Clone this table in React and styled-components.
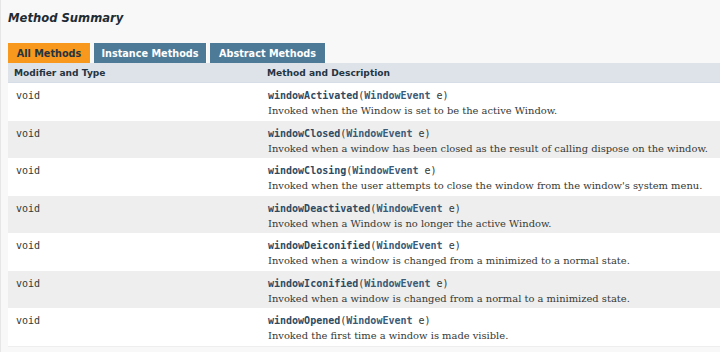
import React from "react";
import styled, { createGlobalStyle } from "styled-components";

const GlobalStyle = createGlobalStyle`
  html, body {
    margin: 0;
    padding: 0;
    background: #f8f8f8;
  }
  body {
    font-family: "DejaVu Sans", Arial, sans-serif;
    color: #353833;
  }
`;

const Section = styled.div`
  border-left: 1px solid #e6e6e6;
  padding: 0 0 5px 7px;
  background: #f8f8f8;
  min-height: 352px;
  box-sizing: border-box;
  overflow: hidden;
`;

const Title = styled.h3`
  margin: 0;
  padding: 10px 0 0 0;
  font-size: 11.6px;
  font-style: italic;
  font-weight: bold;
  color: #1f2b33;
  height: 43px;
  box-sizing: border-box;
  line-height: 16px;
`;

const Tabs = styled.div`
  display: flex;
  gap: 3px;
  height: 20px;
`;

const Tab = styled.span`
  display: flex;
  align-items: center;
  justify-content: center;
  width: ${(p) => p.$w}px;
  height: 20px;
  font-size: 9.7px;
  font-weight: bold;
  background: ${(p) => (p.$active ? "#f8981d" : "#4d7a97")};
  color: ${(p) => (p.$active ? "#253441" : "#ffffff")};
  box-sizing: border-box;
  white-space: nowrap;
  border-right: 1px solid #ffffff;
`;

const Table = styled.div`
  display: grid;
  grid-template-columns: 253px 1fr;
  width: 720px;
  border-bottom: 1px solid #eeeeee;
`;

const HeadCell = styled.div`
  background: #dee3e9;
  height: 20px;
  display: flex;
  align-items: center;
  padding-left: 6px;
  font-size: 9.1px;
  font-weight: bold;
  color: #253441;
  border-bottom: 1px solid #d6dde6;
  box-sizing: border-box;
  white-space: nowrap;
`;

const Cell = styled.div`
  background: ${(p) => (p.$alt ? "#eeeeee" : "#ffffff")};
  padding: 6px 0 2.5px ${(p) => (p.$last ? "7px" : "8px")};
  height: 37.5px;
  box-sizing: border-box;
  white-space: nowrap;
`;

const Code = styled.code`
  display: block;
  font-family: "DejaVu Sans Mono", monospace;
  font-size: 10px;
  line-height: 14px;
  color: #353833;
`;

const MethodName = styled.span`
  font-weight: bold;
  color: #2e4a63;
`;

const TypeLink = styled.span`
  font-weight: bold;
  color: #3c5a76;
`;

const Desc = styled.div`
  font-family: "DejaVu Serif", Georgia, serif;
  font-size: 9.92px;
  line-height: 15px;
  color: #353833;
`;

const methods = [
  ["windowActivated", "Invoked when the Window is set to be the active Window."],
  ["windowClosed", "Invoked when a window has been closed as the result of calling dispose on the window."],
  ["windowClosing", "Invoked when the user attempts to close the window from the window's system menu."],
  ["windowDeactivated", "Invoked when a Window is no longer the active Window."],
  ["windowDeiconified", "Invoked when a window is changed from a minimized to a normal state."],
  ["windowIconified", "Invoked when a window is changed from a normal to a minimized state."],
  ["windowOpened", "Invoked the first time a window is made visible."],
];

export default function App() {
  return (
    <>
      <GlobalStyle />
      <Section>
        <Title>Method Summary</Title>
        <Tabs>
          <Tab $active $w={83}>All Methods</Tab>
          <Tab $w={113}>Instance Methods</Tab>
          <Tab $w={116}>Abstract Methods</Tab>
        </Tabs>
        <Table>
          <HeadCell>Modifier and Type</HeadCell>
          <HeadCell>Method and Description</HeadCell>
          {methods.map(([name, desc], i) => (
            <React.Fragment key={name}>
              <Cell $alt={i % 2 === 1}>
                <Code>void</Code>
              </Cell>
              <Cell $alt={i % 2 === 1} $last>
                <Code>
                  <MethodName>{name}</MethodName>(<TypeLink>WindowEvent</TypeLink>&nbsp;e)
                </Code>
                <Desc>{desc}</Desc>
              </Cell>
            </React.Fragment>
          ))}
        </Table>
      </Section>
    </>
  );
}
